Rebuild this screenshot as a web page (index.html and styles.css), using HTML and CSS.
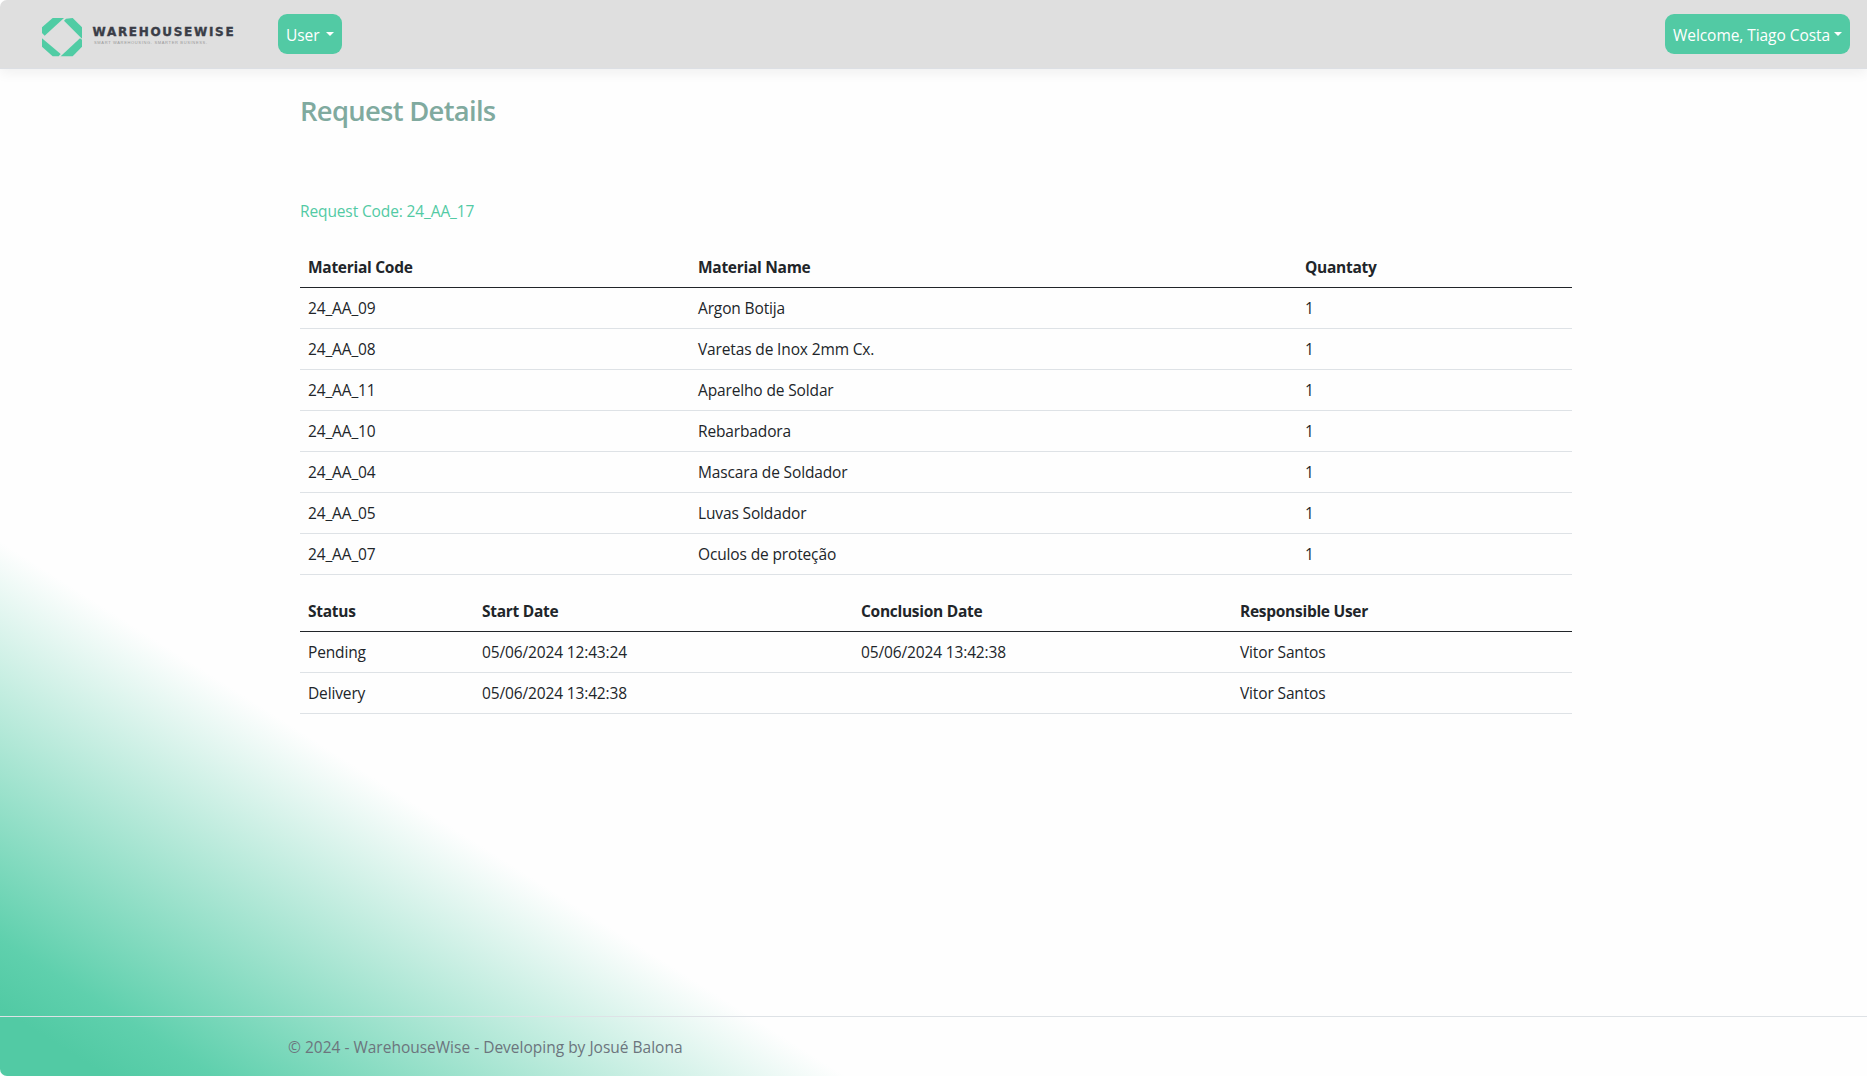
FILE: index.html
```html
<!DOCTYPE html>
<html lang="en">
<head>
<meta charset="utf-8">
<title>Request Details - WarehouseWise</title>
<link rel="stylesheet" href="styles.css">
</head>
<body>
<div class="page">
  <header class="navbar">
    <a class="brand" aria-label="WarehouseWise">
      <svg width="196" height="40" viewBox="0 0 196 40">
        <g transform="scale(.33333)" fill="#50cca4">
          <path d="M0 28 32 0H66L8 53 0 45Z"/>
          <path d="M66 8 72 2 92 0 120 28V62Z"/>
          <path d="M120 65V86L92 115H56L114 61Z"/>
          <path d="M0 61 56 108 50 115H32L0 86Z"/>
        </g>
        <text class="brand-name" x="50.5" y="17.8" textLength="141">WAREHOUSEWISE</text>
        <text class="brand-tagline" x="52" y="26" textLength="113">SMART WAREHOUSING. SMARTER BUSINESS.</text>
      </svg>
    </a>
    <button class="dropdown dropdown-menu-user">User<span class="caret"></span></button>
    <button class="dropdown dropdown-account">Welcome, Tiago Costa<span class="caret"></span></button>
  </header>

  <main class="content">
    <h1>Request Details</h1>
    <p class="request-code">Request Code: 24_AA_17</p>

    <table class="materials">
      <colgroup><col class="col-code"><col class="col-name"><col></colgroup>
      <thead><tr><th>Material Code</th><th>Material Name</th><th>Quantaty</th></tr></thead>
      <tbody>
        <tr><td>24_AA_09</td><td>Argon Botija</td><td>1</td></tr>
        <tr><td>24_AA_08</td><td>Varetas de Inox 2mm Cx.</td><td>1</td></tr>
        <tr><td>24_AA_11</td><td>Aparelho de Soldar</td><td>1</td></tr>
        <tr><td>24_AA_10</td><td>Rebarbadora</td><td>1</td></tr>
        <tr><td>24_AA_04</td><td>Mascara de Soldador</td><td>1</td></tr>
        <tr><td>24_AA_05</td><td>Luvas Soldador</td><td>1</td></tr>
        <tr><td>24_AA_07</td><td>Oculos de proteção</td><td>1</td></tr>
      </tbody>
    </table>

    <table class="statuses">
      <colgroup><col class="col-status"><col class="col-date"><col class="col-date"><col></colgroup>
      <thead><tr><th>Status</th><th>Start Date</th><th>Conclusion Date</th><th>Responsible User</th></tr></thead>
      <tbody>
        <tr><td>Pending</td><td>05/06/2024 12:43:24</td><td>05/06/2024 13:42:38</td><td>Vitor Santos</td></tr>
        <tr><td>Delivery</td><td>05/06/2024 13:42:38</td><td></td><td>Vitor Santos</td></tr>
      </tbody>
    </table>
  </main>

  <footer class="footer">© 2024 - WarehouseWise - Developing by Josué Balona</footer>
</div>
</body>
</html>
```
FILE: styles.css
```css
* { box-sizing: border-box; }

html { background: #fff; }

body {
  margin: 0;
  font-family: "Open Sans", "Noto Sans", sans-serif;
  font-size: 15.5px;
  line-height: 24px;
  letter-spacing: -.14px;
  color: #212529;
}

.page {
  display: flex;
  flex-direction: column;
  height: 100vh;
  overflow: hidden;
  border-radius: 7px 0 0 7px;
  background: linear-gradient(32.3deg, #52caa4 3%, #5fd0ad 6%, #fefefe 23.7%);
}

.navbar {
  display: flex;
  align-items: flex-start;
  flex: none;
  height: 69px;
  padding: 14px 17px 0 42px;
  background: #dfdfdf;
  border-bottom: 1px solid #dcdfe4;
  box-shadow: 0 4px 12px rgba(0, 0, 0, .06);
}

.brand { display: flex; padding-top: 4px; }

.brand-name {
  font: 700 12px "DejaVu Sans", sans-serif;
  fill: #3a3d47;
  stroke: #3a3d47;
  stroke-width: .4px;
}

.brand-tagline {
  font: 4px "Liberation Sans", sans-serif;
  letter-spacing: 0;
  fill: #999;
}

.dropdown {
  display: flex;
  align-items: center;
  height: 40px;
  padding: 1px 8px 0;
  border: 0;
  border-radius: 9px;
  background: #52caa4;
  color: #fff;
  font: inherit;
  letter-spacing: -.06px;
  white-space: nowrap;
}

.dropdown-menu-user {
  width: 64px;
  margin-left: 40px;
  justify-content: space-between;
}

.dropdown-account {
  width: 185px;
  margin-left: auto;
  justify-content: space-between;
}

.caret {
  margin-bottom: 2px;
  border: 4.5px solid transparent;
  border-top-color: #fff;
  border-bottom: 0;
}

.content {
  flex: 1;
  width: 1272px;
  margin-left: 300px;
  padding-top: 25px;
}

h1 {
  margin: 0 0 71px;
  font-size: 27.4px;
  font-weight: 600;
  line-height: 34px;
  letter-spacing: -.7px;
  color: #80aa9f;
}

.request-code { margin: 0 0 24px; letter-spacing: -.12px; color: #52caa4; }

table {
  width: 100%;
  margin-bottom: 16px;
  table-layout: fixed;
  border-collapse: separate;
  border-spacing: 0;
}

.col-code { width: 390px; }
.col-name { width: 607px; }
.col-status { width: 174px; }
.col-date { width: 379px; }

th, td {
  height: 41px;
  padding: 8px;
  text-align: left;
  border-bottom: 1px solid #dee2e6;
}

th {
  font-weight: 700;
  letter-spacing: -.28px;
  border-bottom-color: #212529;
}

.footer {
  flex: none;
  height: 60px;
  padding-left: 288px;
  border-top: 1px solid #dee2e6;
  line-height: 61px;
  letter-spacing: 0;
  color: #6c757d;
}
```
